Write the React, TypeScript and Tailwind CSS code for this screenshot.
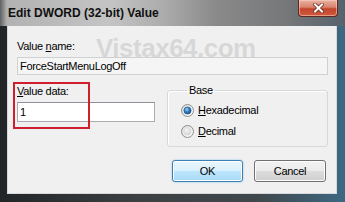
import React from "react";

function Radio({ checked }: { checked: boolean }) {
  return (
    <svg width="13" height="13" viewBox="0 0 13 13" className="shrink-0">
      <defs>
        <linearGradient id={checked ? "rgo1" : "rgo2"} x1="0" y1="0" x2="1" y2="1">
          <stop offset="0" stopColor="#d8d8d8" />
          <stop offset="1" stopColor="#ffffff" />
        </linearGradient>
        <radialGradient id="rgdot" cx="0.4" cy="0.35" r="0.7">
          <stop offset="0" stopColor="#9fd3f7" />
          <stop offset="0.5" stopColor="#2f7fc4" />
          <stop offset="1" stopColor="#14477f" />
        </radialGradient>
        <radialGradient id="rgoff" cx="0.4" cy="0.35" r="0.7">
          <stop offset="0" stopColor="#f4f4f4" />
          <stop offset="1" stopColor="#d0d0d0" />
        </radialGradient>
      </defs>
      <circle cx="6.5" cy="6.5" r="6" fill={`url(#${checked ? "rgo1" : "rgo2"})`} stroke="#8e8f8f" strokeWidth="1" />
      {checked ? (
        <circle cx="6.5" cy="6.5" r="3.6" fill="url(#rgdot)" stroke="#1d4f86" strokeWidth="0.6" />
      ) : (
        <circle cx="6.5" cy="6.5" r="3.8" fill="url(#rgoff)" />
      )}
    </svg>
  );
}

export default function App() {
  return (
    <div
      className="relative w-[345px] h-[202px] overflow-hidden flex flex-col bg-[linear-gradient(to_right,#222527,#3c4043_40%,#40484d_75%,#3d6883)] text-black text-[11px] tracking-[-0.3px]"
      style={{ fontFamily: '"Liberation Sans", Arial, sans-serif' }}
    >
      {/* Title bar */}
      <div className="h-[26px] shrink-0 flex items-start bg-[linear-gradient(to_right,#5e6062_0px,#b2b2b2_7px,#c4c4c4_110px,#ababab_165px,#8a8a8a_215px,#747678_290px,#55636d_345px)]">
        <span className="ml-[8px] mt-[6px] text-[12px] leading-[14px] font-bold tracking-normal text-[#101010]">
          Edit DWORD (32-bit) Value
        </span>
        <div className="ml-auto mr-[7px] w-[40px] h-[17px] rounded-b-[4px] border border-t-0 border-[#5b2a22] bg-[linear-gradient(to_bottom,#eab3a4,#d9826c_45%,#c2452c_55%,#cf5a3c)] flex items-center justify-center shadow-[inset_0_0_0_1px_rgba(255,210,200,0.55)]">
          <svg width="11" height="10" viewBox="0 0 11 10">
            <path d="M2 1.5 L9 8.5 M9 1.5 L2 8.5" stroke="#6b2a1d" strokeWidth="3.6" strokeLinecap="square" />
            <path d="M2 1.5 L9 8.5 M9 1.5 L2 8.5" stroke="#ffffff" strokeWidth="2" strokeLinecap="square" />
          </svg>
        </div>
      </div>

      {/* Client area */}
      <div className="ml-[7px] mr-[8px] h-[168px] shrink-0 bg-[#f0f0f0] border-x border-b border-[#d6d8da] flex flex-col pl-[9px] pr-[8px] pt-[13px]">
        <div className="leading-[14px]">
          Value <u className="underline">n</u>ame:
        </div>
        <div className="mt-[4px] h-[18px] w-full border border-[#cfd0d1] bg-[#f5f5f5] pl-[2px] leading-[16px] flex items-center">
          ForceStartMenuLogOff
        </div>

        <div className="mt-[8px] flex items-start">
          <div className="w-[138px] pt-[1px] flex flex-col">
            <div className="leading-[14px]">
              <u className="underline">V</u>alue data:
            </div>
            <div className="mt-[4px] h-[20px] w-full border border-[#abadb3] border-t-[#8e9198] bg-white pl-[2px] flex items-center leading-[18px]">
              1
            </div>
          </div>

          <fieldset className="ml-[12px] w-[161px] h-[64px] border border-[#d5d9dc] rounded-[3px] px-[13px] shadow-[inset_1px_1px_0_#ffffff]">
            <legend className="ml-[6px] px-[2px] leading-[14px]">Base</legend>
            <div className="mt-[6px] flex items-center h-[14px] gap-[4px]">
              <Radio checked={true} />
              <span className="leading-[14px]">
                <u className="underline">H</u>exadecimal
              </span>
            </div>
            <div className="mt-[7px] flex items-center h-[14px] gap-[4px]">
              <Radio checked={false} />
              <span className="leading-[14px]">
                <u className="underline">D</u>ecimal
              </span>
            </div>
          </fieldset>
        </div>

        <div className="mt-[13px] flex justify-end gap-[11px] mr-[2px]">
          <button className="w-[71px] h-[22px] rounded-[3px] border border-[#3c7fb1] bg-[linear-gradient(to_bottom,#eaf6fd,#d9f0fc_50%,#bee6fd_50%,#a7d9f5)] shadow-[inset_0_0_0_1px_#ffffff,0_0_2px_#7cc3ef] leading-[20px] text-[11px]">
            OK
          </button>
          <button className="w-[72px] h-[22px] rounded-[3px] border border-[#707070] bg-[linear-gradient(to_bottom,#f2f2f2,#ebebeb_50%,#dddddd_50%,#cfcfcf)] shadow-[inset_0_0_0_1px_#fcfcfc] leading-[20px] text-[11px]">
            Cancel
          </button>
        </div>
      </div>

      {/* Red annotation */}
      <div className="absolute left-[13px] top-[82px] w-[77px] h-[47px] border-2 border-[#cf1f2e] pointer-events-none" />

      {/* Watermark */}
      <div className="absolute left-[96px] top-[33px] text-[26px] leading-[30px] font-bold tracking-[-0.5px] text-[rgba(185,185,185,0.45)] pointer-events-none select-none">
        Vistax64.com
      </div>
    </div>
  );
}
